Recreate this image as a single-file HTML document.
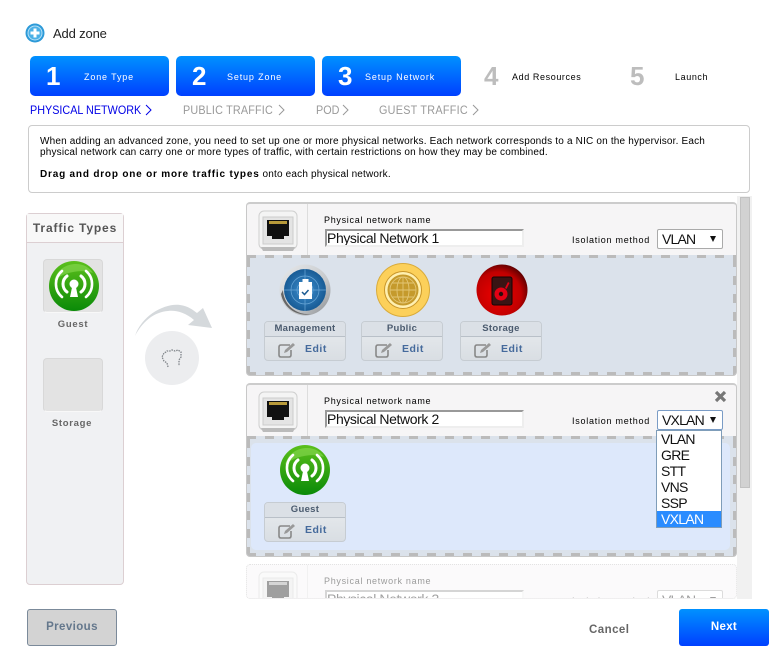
<!DOCTYPE html>
<html><head><meta charset="utf-8"><style>
*{box-sizing:border-box}
html,body{margin:0;padding:0;background:#fff;width:780px;height:663px;overflow:hidden}
body{font-family:"Liberation Sans",sans-serif;position:relative;color:#000}
.a{position:absolute;white-space:nowrap}
.step{position:absolute;top:56px;width:139px;height:40px;border-radius:5px;background:linear-gradient(#0091ff,#0040ff)}
.num{position:absolute;font:bold 26px/30px "Liberation Sans",sans-serif;top:61px;color:#fff}
.num.g{color:#bdbdbd}
.lab{position:absolute;top:72px;font-size:9px;line-height:11px;letter-spacing:.85px;white-space:nowrap;color:#fff}
.lab.k{color:#000;letter-spacing:.6px}
.nav{position:absolute;top:103px;font-size:12px;line-height:14px;color:#999;white-space:nowrap;transform:scaleX(.9);transform-origin:0 0}
.chev{position:absolute;top:104px}
.net{position:absolute;left:246px;width:491px;height:174px;background:#f6f5f6;border:1px solid #c8c8c8;border-top:2px solid #ccc;border-radius:4px;overflow:hidden}
.vd{position:absolute;left:60px;top:0;bottom:0;width:1px;background:#ddd}
.drop{position:absolute;left:0;top:51px;width:489px;height:120px;background:#dbe2eb}
.d1{position:absolute;background:repeating-linear-gradient(90deg,#bbb 0 9px,transparent 9px 18px);height:3px;left:0;right:0}
.d2{position:absolute;background:repeating-linear-gradient(0deg,#bbb 0 9px,transparent 9px 18px);width:3px;top:0;bottom:0}
.inner{position:absolute;left:4px;top:7px;width:479px;height:107px;background:#dde8fb;border-radius:5px}
.pn{position:absolute;left:77px;top:10px;font-size:9px;line-height:12px;letter-spacing:.7px;color:#000;white-space:nowrap}
.inp{position:absolute;left:78px;top:25px;width:199px;height:18px;background:#fff;border:2px solid #eee;border-top-color:#999;border-left-color:#999;font-size:14px;line-height:15px;letter-spacing:-.4px;color:#111;white-space:nowrap;overflow:hidden}
.iso{position:absolute;left:325px;top:30px;font-size:9px;line-height:12px;letter-spacing:.75px;white-space:nowrap}
.sel{position:absolute;left:410px;top:25px;width:66px;height:20px;background:#fff;border:1px solid #aaa;border-radius:2px;font-size:14px;line-height:18px;padding-left:4px;color:#111;letter-spacing:-.8px}
.sel i{position:absolute;right:6px;top:6px;width:0;height:0;border:3.5px solid transparent;border-top:6px solid #111;border-bottom:0}
.it{position:absolute;width:82px;height:40px;top:117px;border:1px solid #c6ccd2;border-radius:4px;background:linear-gradient(#e9ecef,#d9dee3);overflow:hidden}
.it b{display:block;height:15px;background:#dbe0e6;border-bottom:1px solid #b9c0c8;text-align:center;font:bold 9.5px/14px "Liberation Sans",sans-serif;letter-spacing:.3px;color:#4a5a6e}
.it span{position:absolute;left:40px;top:21px;font:bold 10.5px/12px "Liberation Sans",sans-serif;letter-spacing:.5px;color:#456a9c}
.it svg{position:absolute;left:13px;top:20px}
.ic{position:absolute}
.dd{font-size:14px;line-height:16px;letter-spacing:-.7px}
</style></head><body>
<svg width="0" height="0" style="position:absolute"><defs>
<linearGradient id="gg" x1="0" y1="0" x2="0" y2="1"><stop offset="0" stop-color="#5cc01c"/><stop offset="1" stop-color="#0a8a08"/></linearGradient>
<linearGradient id="sv" x1="0" y1="0" x2="1" y2="1"><stop offset="0" stop-color="#e8eaec"/><stop offset=".6" stop-color="#c6c9cc"/><stop offset="1" stop-color="#8a8d90"/></linearGradient>
<radialGradient id="rr" cx=".42" cy=".6" r=".65"><stop offset="0" stop-color="#ee0000"/><stop offset=".7" stop-color="#c00000"/><stop offset="1" stop-color="#500000"/></radialGradient>
<radialGradient id="bb" cx=".5" cy=".5" r=".55"><stop offset="0" stop-color="#3d8fd0"/><stop offset="1" stop-color="#14568f"/></radialGradient>
<symbol id="guest" viewBox="0 0 50 50">
<circle cx="25" cy="25" r="25" fill="url(#gg)"/><path d="M5 20C8 8 18 3 27 3c8 0 14 4 17 9C35 8 15 10 5 20z" fill="#8fdc5a" opacity=".55"/>
<g fill="none" stroke="#fff" stroke-width="3" stroke-linecap="round"><path d="M18 31A10 10 0 0 1 18 15M32 31A10 10 0 0 0 32 15"/><path d="M13 36A17 17 0 0 1 13 10M37 36A17 17 0 0 0 37 10" stroke-width="2.600"/></g>
<circle cx="25" cy="23" r="4.500" fill="#fff"/><path d="M23.500 24h3l2.500 12H21z" fill="#fff"/></symbol>
<symbol id="pen" viewBox="0 0 18 16"><path d="M12 3H3Q1 3 1 5V13Q1 15 3 15H11Q13 15 13 13V8" fill="none" stroke="#888" stroke-width="1.600"/><path d="M6 11l1-3 8-7 2 2-8 7z" fill="#999"/></symbol>
<symbol id="rj" viewBox="0 0 40 42"><rect x="1" y="1" width="38" height="38" rx="5" fill="#f4f4f4" stroke="#cfcfcf"/><path d="M3 37h34l-2 4H5z" fill="#bbb"/><rect x="5" y="7" width="30" height="27" fill="#e4e4e4" stroke="#ccc"/><path d="M9 10H31V26H26V29H14V26H9z" fill="#111"/><rect x="11" y="11" width="18" height="3" fill="#b89a3a"/></symbol>
<symbol id="mg" viewBox="0 0 52 52"><circle cx="26" cy="26" r="25.500" fill="url(#sv)"/><path d="M2 30a25 25 0 0 0 30 20A25 25 0 0 1 4 26z" fill="#666"/><circle cx="26" cy="26" r="21" fill="url(#bb)"/><g fill="none" stroke="#6ba8d8" stroke-width=".7"><circle cx="26" cy="26" r="14"/><circle cx="26" cy="26" r="8"/><path d="M5 26H47M26 5V47"/></g><rect x="20" y="18" width="13" height="17" fill="#fff"/><rect x="23.500" y="15" width="6" height="4" fill="#fff"/><path d="M23 28l2.500 2.500 4-4.500" fill="none" stroke="#1d5c92" stroke-width="1.500"/></symbol>
<symbol id="pb" viewBox="0 0 54 54"><circle cx="27" cy="27" r="26.500" fill="#fcd05a" stroke="#d9ab3a"/><circle cx="27" cy="27" r="18.500" fill="#fff0b0" stroke="#c9962a"/><circle cx="27" cy="27" r="15.500" fill="#c59a2c"/><g fill="none" stroke="#e3c573" stroke-width=".9"><circle cx="27" cy="27" r="13"/><ellipse cx="27" cy="27" rx="6" ry="13"/><path d="M14 27H40M16 20H38M16 34H38M27 14V40"/></g></symbol>
<symbol id="st" viewBox="0 0 52 52"><circle cx="26" cy="26" r="25.500" fill="url(#rr)"/><rect x="16" y="13" width="20" height="28" rx="2" fill="#3a1414" stroke="#150505"/><circle cx="25" cy="30" r="6.500" fill="#e40014"/><circle cx="25" cy="30" r="2.200" fill="#2a0c0c"/><path d="M29 24l3-6 1.500 1-3 6z" fill="#e40014"/></symbol>
<symbol id="cv" viewBox="0 0 7 12"><path d="M1 1L6 6L1 11" fill="none" stroke="currentColor"/></symbol>
</defs></svg>

<svg class="ic" style="left:25px;top:23px" width="20" height="21" viewBox="0 0 20 21"><circle cx="10" cy="10" r="9.500" fill="#2d9ad8"/><circle cx="10" cy="10" r="7" fill="#4bb0e6" stroke="#b5e0f7"/><path d="M8.500 5.500h3v3h3v3h-3v3h-3v-3h-3v-3h3z" fill="#fff"/></svg>
<div class="a" style="left:53px;top:26px;font-size:13px;line-height:15px;letter-spacing:-.15px;color:#222">Add zone</div>

<div class="step" style="left:30px"></div><div class="step" style="left:176px"></div><div class="step" style="left:322px"></div>
<div class="num" style="left:46px">1</div><div class="num" style="left:192px">2</div><div class="num" style="left:338px">3</div>
<div class="num g" style="left:484px">4</div><div class="num g" style="left:630px">5</div>
<div class="lab" style="left:84px">Zone Type</div><div class="lab" style="left:227px">Setup Zone</div><div class="lab" style="left:365px">Setup Network</div>
<div class="lab k" style="left:512px">Add Resources</div><div class="lab k" style="left:675px">Launch</div>

<div class="nav" style="left:30px;color:#0000e6">PHYSICAL NETWORK</div>
<svg class="chev" style="left:145px;color:#0000e6" width="7" height="12"><use href="#cv"/></svg>
<div class="nav" style="left:183px;letter-spacing:.2px">PUBLIC TRAFFIC</div>
<svg class="chev" style="left:278px;color:#999" width="7" height="12"><use href="#cv"/></svg>
<div class="nav" style="left:316px">POD</div>
<svg class="chev" style="left:342px;color:#999" width="7" height="12"><use href="#cv"/></svg>
<div class="nav" style="left:379px;letter-spacing:.3px">GUEST TRAFFIC</div>
<svg class="chev" style="left:472px;color:#999" width="7" height="12"><use href="#cv"/></svg>

<div class="a" style="left:28px;top:125px;width:722px;height:68px;border:1px solid #ccc;border-radius:4px"></div>
<div class="a" style="left:40px;top:136px;font-size:10px;line-height:11px;letter-spacing:.18px">When adding an advanced zone, you need to set up one or more physical networks. Each network corresponds to a NIC on the hypervisor. Each</div>
<div class="a" style="left:40px;top:147px;font-size:10px;line-height:11px;letter-spacing:.18px">physical network can carry one or more types of traffic, with certain restrictions on how they may be combined.</div>
<div class="a" style="left:40px;top:169px;font-size:10px;line-height:11px;letter-spacing:.18px"><b style="letter-spacing:.8px">Drag and drop one or more traffic types</b> onto each physical network.</div>

<div class="a" style="left:26px;top:213px;width:98px;height:372px;background:#f0f1f3;border:1px solid #dccfd2;border-radius:4px">
<div style="height:29px;background:#f8f8f8;border-bottom:1px solid #dccfd2;font:bold 12px/29px 'Liberation Sans',sans-serif;letter-spacing:.85px;color:#555;text-align:center">Traffic Types</div></div>
<div class="a" style="left:43px;top:259px;width:60px;height:54px;background:#e3e3e3;border:1px solid #d8d8d8;border-bottom-color:#f8f8f8;border-radius:4px"></div>
<svg class="ic" style="left:49px;top:261px" width="50" height="50"><use href="#guest"/></svg>
<div class="a" style="left:43px;top:319px;width:60px;text-align:center;font:bold 9.500px/12px 'Liberation Sans',sans-serif;letter-spacing:.7px;color:#666">Guest</div>
<div class="a" style="left:43px;top:358px;width:60px;height:54px;background:#e3e3e3;border:1px solid #d8d8d8;border-bottom-color:#f8f8f8;border-radius:4px"></div>
<div class="a" style="left:42px;top:418px;width:60px;text-align:center;font:bold 9.500px/12px 'Liberation Sans',sans-serif;letter-spacing:.7px;color:#666">Storage</div>

<svg class="ic" style="left:130px;top:300px" width="90" height="90" viewBox="0 0 90 90">
<path d="M5 36C12 15 35 3 50 5C58 6 63 10 67 13L73 8L82 28L58 25L64 20C55 12 45 10 38 11C24 12 12 22 5 36z" fill="#d5d9dc"/>
<circle cx="42" cy="58" r="27" fill="#ecedef"/>
<path d="M38 67l-1-4-3-2-2-4 2-4 2-1 1-1h3l2-1 3 1 3-1 3 2v5l-2 3v6" fill="none" stroke="#7f8489" stroke-width="1.300" stroke-dasharray="1.500 1"/></svg>

<div class="a" style="left:0;top:0;width:780px;height:599px;overflow:hidden">

<div class="net" style="top:202px">
<div class="vd"></div>
<svg class="ic" style="left:11px;top:6px" width="40" height="42"><use href="#rj"/></svg>
<div class="pn">Physical network name</div><div class="inp">Physical Network 1</div>
<div class="iso">Isolation method</div><div class="sel">VLAN<i></i></div>
<div class="drop">
<div class="d1" style="top:0"></div><div class="d1" style="bottom:0"></div><div class="d2" style="left:0"></div><div class="d2" style="right:0"></div>
</div>
<svg class="ic" style="left:32px;top:60px" width="52" height="52"><use href="#mg"/></svg>
<svg class="ic" style="left:129px;top:59px" width="54" height="54"><use href="#pb"/></svg>
<svg class="ic" style="left:229px;top:60px" width="52" height="52"><use href="#st"/></svg>
<div class="it" style="left:17px"><b>Management</b><svg width="18" height="16"><use href="#pen"/></svg><span>Edit</span></div>
<div class="it" style="left:114px"><b>Public</b><svg width="18" height="16"><use href="#pen"/></svg><span>Edit</span></div>
<div class="it" style="left:213px"><b>Storage</b><svg width="18" height="16"><use href="#pen"/></svg><span>Edit</span></div>
</div>

<div class="net" style="top:383px">
<div class="vd"></div>
<svg class="ic" style="left:11px;top:6px" width="40" height="42"><use href="#rj"/></svg>
<div class="pn">Physical network name</div><div class="inp">Physical Network 2</div>
<div class="iso">Isolation method</div><div class="sel" style="border-color:#7a9cc6">VXLAN<i></i></div>
<div class="drop">
<div class="d1" style="top:0"></div><div class="d1" style="bottom:0"></div><div class="d2" style="left:0"></div><div class="d2" style="right:0"></div>
<div class="inner"></div>
</div>
<svg class="ic" style="left:33px;top:60px" width="50" height="50"><use href="#guest"/></svg>
<div class="it" style="left:17px"><b>Guest</b><svg width="18" height="16"><use href="#pen"/></svg><span>Edit</span></div>
<svg class="ic" style="left:467px;top:5px" width="13" height="13" viewBox="0 0 13 13"><path d="M2 2L11 11M11 2L2 11" stroke="#777" stroke-width="3.200"/></svg>
</div>

<div class="net" style="top:564px;height:35px;opacity:.4;border:1px dotted #bbb">
<div class="vd"></div>
<svg class="ic" style="left:11px;top:6px;filter:grayscale(1)" width="40" height="42"><use href="#rj"/></svg>
<div class="pn">Physical network name</div><div class="inp">Physical Network 3</div>
<div class="iso">Isolation method</div><div class="sel">VLAN<i></i></div>
</div>

<div class="a" style="left:737px;top:196px;width:15px;height:403px;background:#f1f1f1"></div>
<div class="a" style="left:740px;top:197px;width:10px;height:291px;background:#d2d2d2;border:1px solid #c2c2c2"></div>
</div>

<div class="a dd" style="left:656px;top:430px;width:66px;height:98px;background:#fff;border:1px solid #7f9db9;color:#111;padding-left:4px">VLAN<br>GRE<br>STT<br>VNS<br>SSP</div>
<div class="a dd" style="left:657px;top:511px;width:64px;height:16px;background:#2a8cff;color:#fff;padding-left:4px">VXLAN</div>

<div class="a" style="left:27px;top:609px;width:90px;height:37px;background:#d3d3d3;border:1px solid #7b8a9a;border-radius:3px;text-align:center;font:bold 11.500px/35px 'Liberation Sans',sans-serif;letter-spacing:.4px;color:#64778c">Previous</div>
<div class="a" style="left:589px;top:623px;font:bold 11.500px/14px 'Liberation Sans',sans-serif;letter-spacing:.45px;color:#666">Cancel</div>
<div class="a" style="left:679px;top:609px;width:90px;height:37px;background:linear-gradient(#0091ff,#0040ff);border-radius:3px;text-align:center;font:bold 11.500px/36px 'Liberation Sans',sans-serif;letter-spacing:.3px;color:#fff">Next</div>
</body></html>
